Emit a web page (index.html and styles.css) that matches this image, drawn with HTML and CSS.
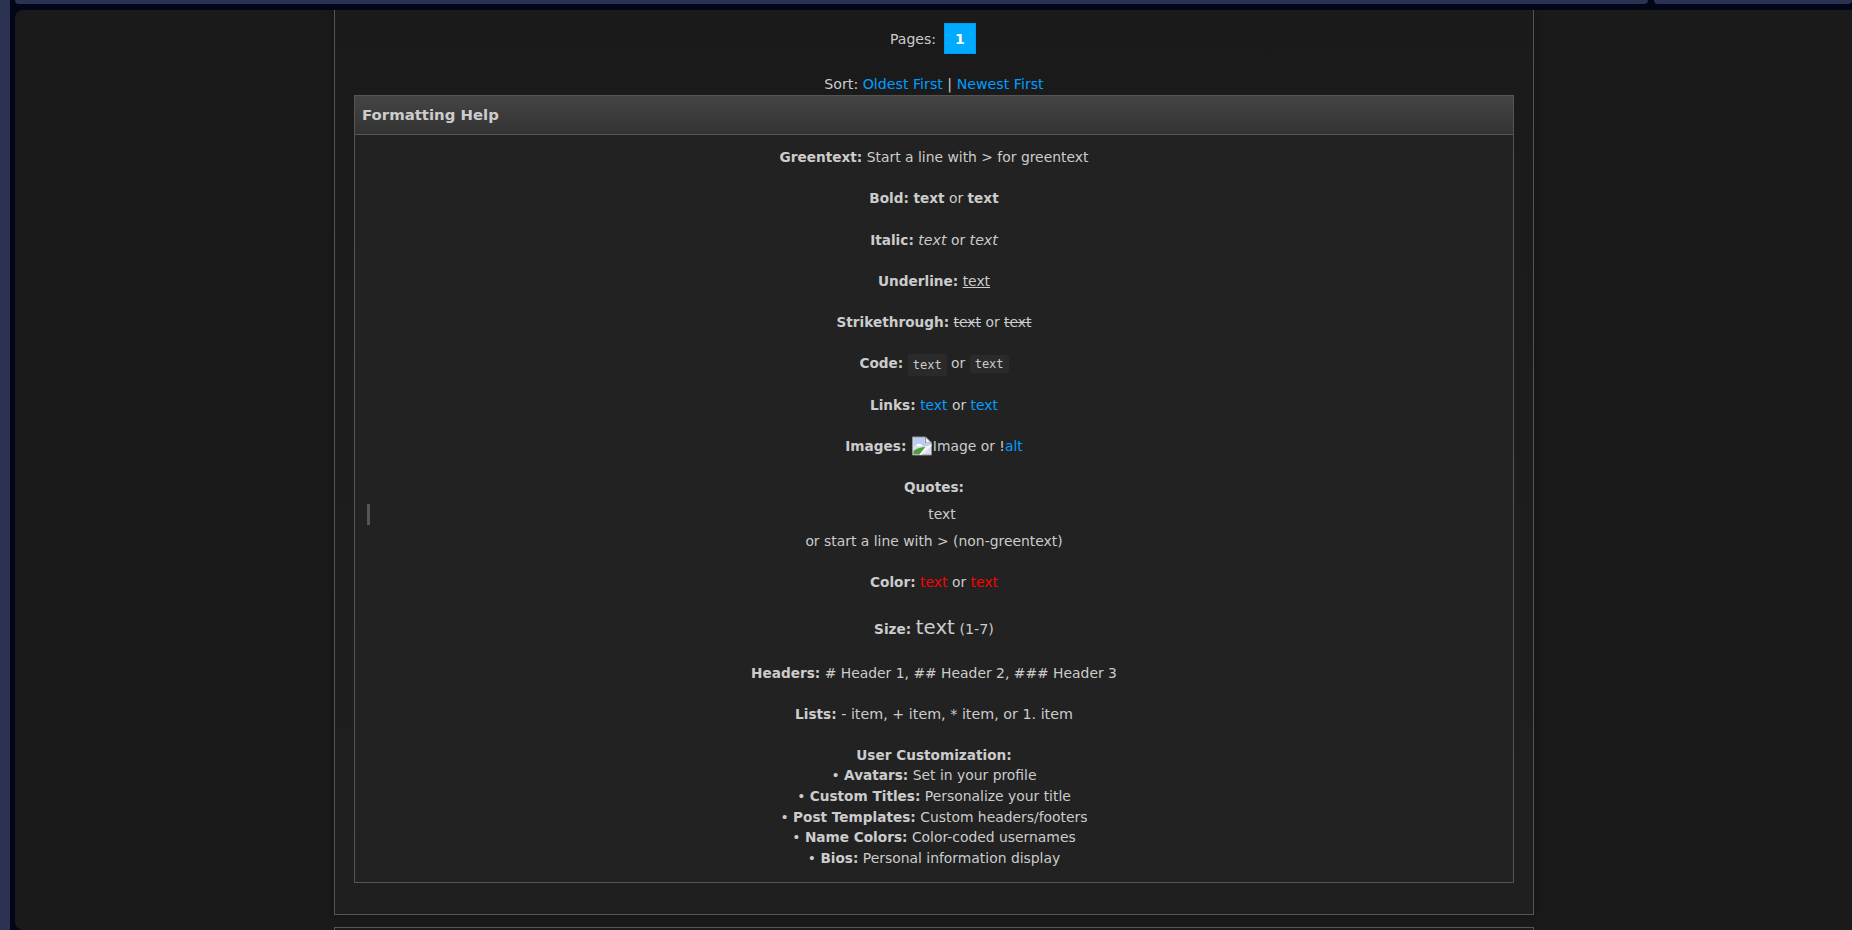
FILE: index.html
```html
<!DOCTYPE html>
<html>
  <head>
    <meta name="viewport" content="width=device-width, initial-scale=1" />
    <link rel="stylesheet" href="styles.css">
  </head>
  <body>
    <div class="side"></div>
    <div class="main">
      <div class="topbars">
        <div class="topbar topbar-left"></div>
        <div class="topbar topbar-right"></div>
      </div>
      <div class="panel">
        <div class="thread">
          <div class="pages">
            <span>Pages:</span>
            <a class="page-num">1</a>
          </div>
          <div class="sort">Sort: <a>Oldest First</a> | <a>Newest First</a></div>

          <div class="help">
            <div class="help-head">Formatting Help</div>
            <div class="help-body">
              <p><b>Greentext:</b> Start a line with &gt; for greentext</p>
              <p><b>Bold:</b> <b>text</b> or <b>text</b></p>
              <p><b>Italic:</b> <i>text</i> or <i>text</i></p>
              <p><b>Underline:</b> <u>text</u></p>
              <p><b>Strikethrough:</b> <s>text</s> or <s>text</s></p>
              <p><b>Code:</b> <code class="code-box">text</code> or <code>text</code></p>
              <p><b>Links:</b> <a>text</a> or <a>text</a></p>
              <p>
                <b>Images:</b>
                <svg class="broken" width="22" height="20" viewBox="0 0 21 20">
                  <path d="M1 1h13l6 6v12H1z" fill="#d8dde6" stroke="#8c8f94" stroke-width="1"/>
                  <path d="M14 1v6h6z" fill="#f4f4f4" stroke="#8c8f94" stroke-width="1"/>
                  <path d="M2 2h11v5h6v3H2z" fill="#b9cdf0"/>
                  <path d="M4 10c2-3 5-3 7 0z" fill="#fff"/>
                  <path d="M2 18v-3c4-3 8-4 12-4l-6 7z" fill="#4f9e3c"/>
                  <path d="M14 11l6-3v2l-10 9H8z" fill="#f4f4f4"/>
                </svg>Image or !<a>alt</a>
              </p>
              <p class="tight"><b>Quotes:</b></p>
              <blockquote>text</blockquote>
              <p>or start a line with &gt; (non-greentext)</p>
              <p><b>Color:</b> <span class="red">text</span> or <span class="red">text</span></p>
              <p class="size-row"><b>Size:</b> <span class="big">text</span> (1-7)</p>
              <p><b>Headers:</b> # Header 1, ## Header 2, ### Header 3</p>
              <p class="list-row"><b>Lists:</b> - item, + item, * item, or 1. item</p>
              <div class="custom">
                <b>User Customization:</b><br>
                • <b>Avatars:</b> Set in your profile<br>
                • <b>Custom Titles:</b> Personalize your title<br>
                • <b>Post Templates:</b> Custom headers/footers<br>
                • <b>Name Colors:</b> Color-coded usernames<br>
                • <b>Bios:</b> Personal information display
              </div>
            </div>
          </div>
        </div>
        <div class="next-box"></div>
      </div>
    </div>
  </body>
</html>
```

FILE: styles.css
```css
* {
  box-sizing: border-box;
}
html,
body {
  height: 100%;
}
body {
  margin: 0;
  display: flex;
  overflow: hidden;
  background-color: #020617;
  font-family: "DejaVu Sans", Verdana, sans-serif;
  font-size: 13.9px;
  color: #cccccc;
}
a {
  color: #009dff;
}

/* Window chrome around the page */
.side {
  width: 10px;
  background-color: #2b3252;
}
.main {
  flex: 1;
  min-width: 0;
  padding-left: 5px;
  display: flex;
  flex-direction: column;
}
.topbars {
  display: flex;
  gap: 6px;
  height: 10px;
  flex: none;
}
.topbar {
  height: 4px;
  background-color: #2b3252;
  border-radius: 0 0 8px 8px;
}
.topbar-left {
  width: 1633px;
}
.topbar-right {
  flex: 1;
}
.panel {
  flex: 1;
  min-height: 0;
  overflow: hidden;
  background-color: #1a1a1a;
  border-radius: 8px 0 0 8px;
  padding-left: 319px;
}

/* Thread container */
.thread {
  width: 1200px;
  height: 905px;
  padding: 13px 19px 0;
  background: linear-gradient(#1a1a1a, #1f1f1f);
  border: 1px solid #555;
  border-top: 0;
  box-shadow: 0 0 8px rgba(0, 0, 0, 0.3);
}
.next-box {
  width: 1200px;
  height: 20px;
  margin-top: 12px;
  background-color: #1c1c1c;
  border: 1px solid #555;
}

/* Pagination and sort */
.pages {
  display: flex;
  justify-content: center;
  align-items: center;
  gap: 8px;
  height: 31px;
  padding-right: 2px;
  font-size: 14px;
}
.page-num {
  width: 32px;
  height: 31px;
  display: flex;
  align-items: center;
  justify-content: center;
  background-color: #00aaff;
  border: 1px solid #0099ff;
  color: #fff;
  font-weight: bold;
}
.sort {
  margin-top: 21px;
  height: 20px;
  line-height: 19px;
  text-align: center;
  font-size: 14.2px;
}

/* Formatting help box */
.help {
  background-color: #222222;
  border: 1px solid #555;
}
.help-head {
  height: 39px;
  padding: 0 7px;
  line-height: 38px;
  font-size: 14.9px;
  font-weight: bold;
  background: linear-gradient(#444444, #333333);
  border-bottom: 1px solid #555;
}
.help-body {
  padding: 12px 8px 14px;
  text-align: center;
  line-height: 21.3px;
}
.help-body p {
  margin: 0 0 20px;
}
.help-body .tight {
  margin-bottom: 5px;
}
.help-body b {
  font-size: 13.65px;
  font-weight: bold;
}
.help-body i {
  font-size: 14.2px;
}
blockquote {
  margin: 0 0 6px 4px;
  padding: 0 0 0 9px;
  border-left: 3px solid #555;
}
code {
  font-family: "DejaVu Sans Mono", monospace;
  font-size: 12px;
  line-height: 1;
  padding: 2px 5px;
  border-radius: 3px;
  background-color: #2a2a2a;
}
.code-box {
  padding: 4px 5px;
  position: relative;
  top: 1px;
}
.broken {
  vertical-align: -5px;
  margin-top: -4px;
}
.red {
  color: #ff0000;
}
.big {
  font-size: 19.8px;
}
.help-body .size-row {
  line-height: 27.6px;
  font-size: 14.3px;
}
.help-body .list-row {
  font-size: 14.3px;
  margin-bottom: 19px;
}
.custom {
  line-height: 20.6px;
}
```
